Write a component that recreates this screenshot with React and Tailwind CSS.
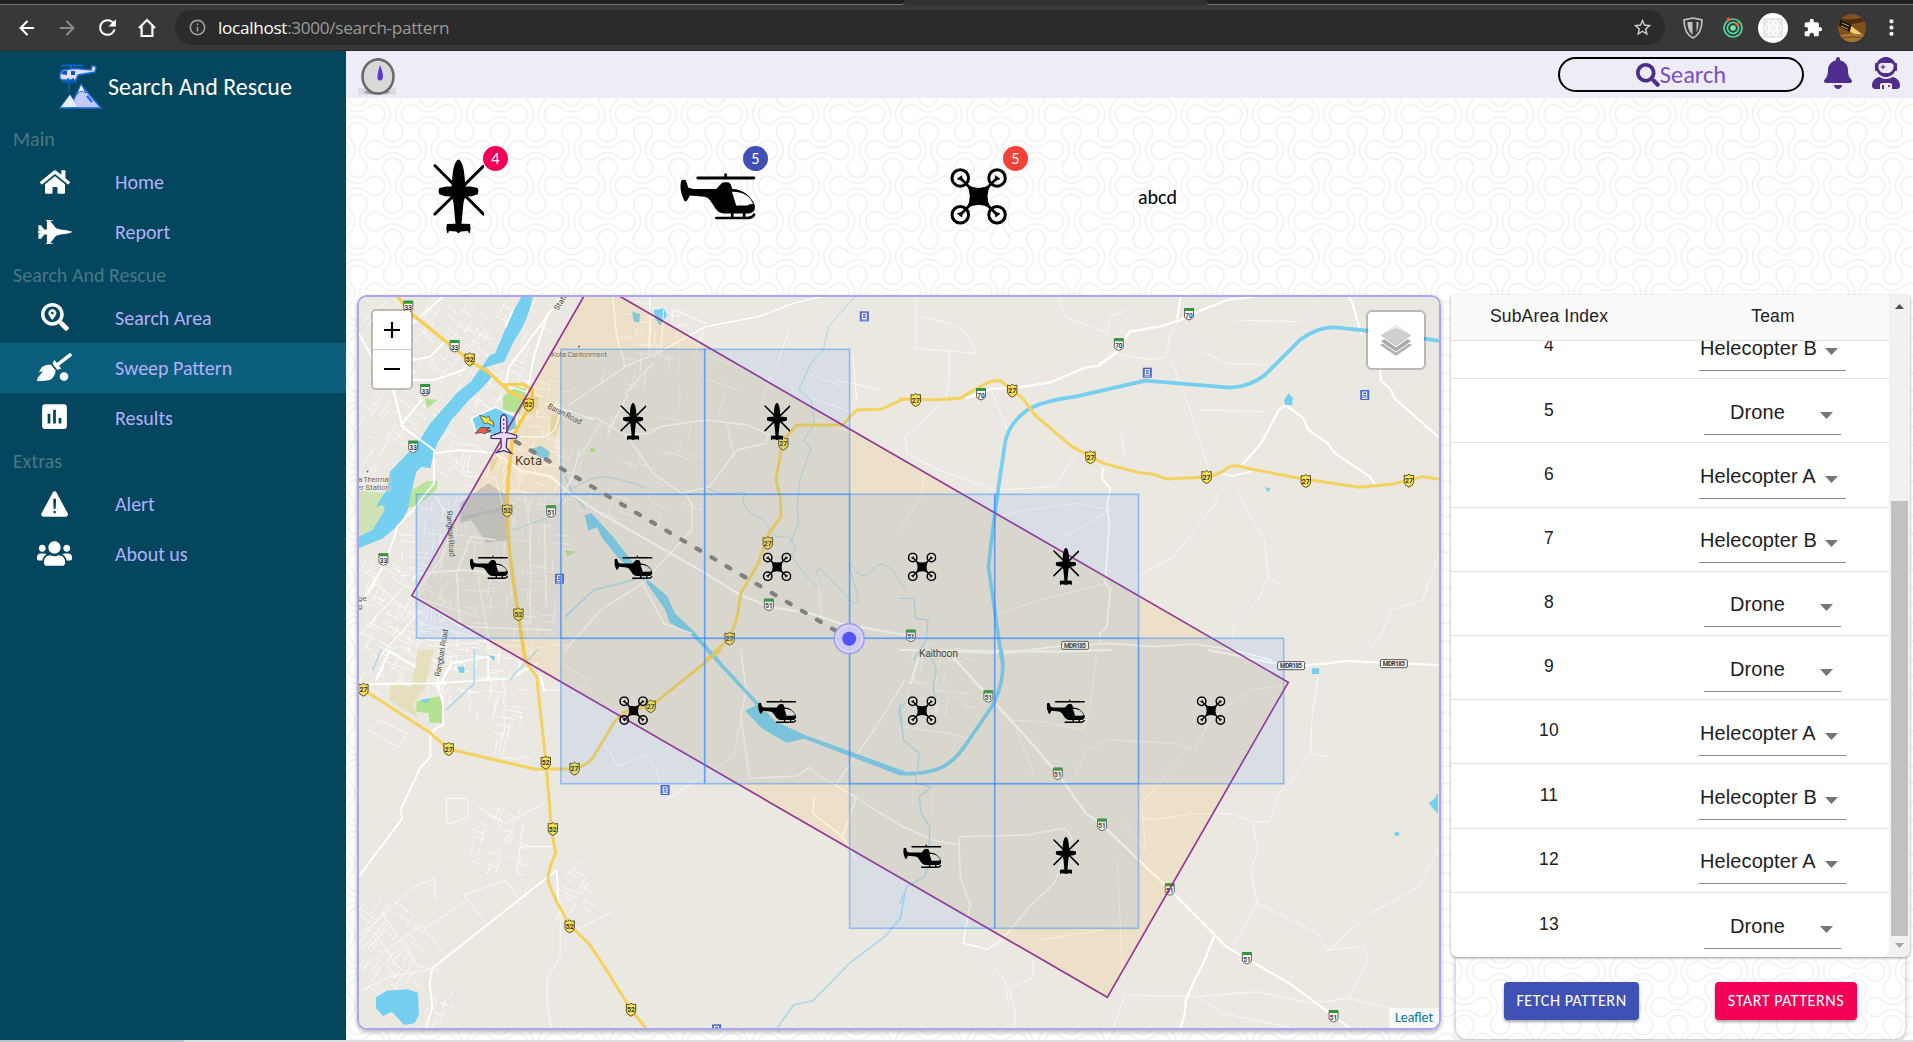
import React from "react";
import {
  FaHome,
  FaFighterJet,
  FaSearchLocation,
  FaQuidditch,
  FaUsers,
  FaSearch,
  FaBell,
  FaUserAstronaut,
} from "react-icons/fa";
import { IoWarning } from "react-icons/io5";
import { MdPoll, MdStarBorder, MdExtension, MdMoreVert, MdRefresh, MdInfoOutline } from "react-icons/md";
import { ArrowLeft, ArrowRight } from "lucide-react";

/* ---------- vehicles ---------- */

function Apache(props) {
  return (
    <svg viewBox="232 206 154 226" {...props}>
      <path d="M238 226 384 372M384 228 238 372" stroke="#000" strokeWidth="9" strokeLinecap="round" />
      <path d="M309 207c9 3 17 22 19 60l2 22 15 0 22 4q5 10 0 19l-18 6-18 1q-5 6-7 20l-6 62 26 1q3 14-1 28l-4-2-1-5-22 2-7 5-7-5-22-2-1 5-4 2q-5-14-1-28l26-1-6-62q-2-14-7-20l-18-1-18-6q-5-9 0-19l22-4 15 0 2-22c2-38 10-57 19-60z" />
    </svg>
  );
}

function Helicopter(props) {
  return (
    <svg viewBox="977 249 228 142" {...props}>
      <path d="M1030 264H1199" stroke="#000" strokeWidth="9" strokeLinecap="round" />
      <path d="M1110 252q4-4 8 0v11h-8z" />
      <path
        fillRule="evenodd"
        d="M980 272q8-4 14-1l7 22 15 4 70 0 13-14q3-6 12-6h11q8 2 12 20c30 0 56 20 68 48q4 24-18 26h-76q-14 0-24-14l-16-24q-6-10-18-12l-44-4-8 14q-3 6-9 2l-8-20q-6-22-1-41zM1133 306l12 38q2 5 8 3h26q8-4 18-4c-8-22-28-38-64-37z"
      />
      <path d="M1086 385h90q18 0 24-10" fill="none" stroke="#000" strokeWidth="8" strokeLinecap="round" />
      <path d="M1134 366v18M1170 366v18" stroke="#000" strokeWidth="8" />
    </svg>
  );
}

function Drone(props) {
  return (
    <svg viewBox="272 234 172 172" {...props}>
      <g fill="none" stroke="#000" strokeWidth="9">
        <circle cx="303" cy="264" r="25" />
        <circle cx="414" cy="264" r="25" />
        <circle cx="303" cy="375" r="25" />
        <circle cx="414" cy="375" r="25" />
      </g>
      <path
        d="M303 264 345 306M414 264 372 306M303 375 345 333M414 375 372 333"
        stroke="#000"
        strokeWidth="8"
      />
      <path d="M294 267 308 257v15zM423 267 409 257v15zM294 372 308 382v-15zM423 372 409 382v-15z" stroke="#000" strokeWidth="2" />
      <path d="M322 284q36 20 73 0-20 36 0 72-36-22-73 0 20-36 0-72z" />
    </svg>
  );
}

/* ---------- browser toolbar ---------- */

function BrowserBar() {
  return (
    <div className="h-[51px] shrink-0 flex flex-col bg-[#383838] border-b border-[#2a2a2a]">
      <div className="h-[5px] shrink-0 flex bg-[#202020]">
        <div className="w-[905px] border-b border-[#747474] rounded-br" />
        <div className="w-[301px] bg-[#303030]" />
        <div className="flex-1 border-b border-[#747474] rounded-bl" />
      </div>
      <div className="flex-1 flex items-center text-white">
        <ArrowLeft className="ml-[16px] size-[22px]" strokeWidth={2.2} />
        <ArrowRight className="ml-[18px] size-[22px] text-[#8a8a8a]" strokeWidth={2.2} />
        <MdRefresh className="ml-[17px] size-[25px]" />
        <svg className="ml-[16px] size-[22px]" viewBox="0 0 22 22" fill="none" stroke="currentColor" strokeWidth="2.2">
          <path d="M3 11 11 3l8 8M5.6 9v10h10.8V9" />
        </svg>
        <div className="ml-[17px] w-[1490px] h-[35px] rounded-full bg-[#2b2b2b] flex items-center pl-[13px] pr-3">
          <MdInfoOutline className="size-[19px] text-[#9aa0a6]" />
          <span className="ml-[11px] text-[17.2px] tracking-[-0.320px] font-['Open_Sans','Noto_Sans',sans-serif] leading-none text-[#9a9a9a]">
            <span className="text-white">localhost</span>:3000/search-pattern
          </span>
          <MdStarBorder className="ml-auto size-[21px] text-[#cfcfcf]" />
        </div>
        <svg className="ml-[18px] w-[20px] h-[22px]" viewBox="0 0 20 22">
          <path d="M10 1 19 3C19 13 16 18 10 21 4 18 1 13 1 3z" fill="none" stroke="#c4c4c4" strokeWidth="1.6" />
          <path d="M4.500 5h5v13C6.500 15 4.500 11 4.500 5z" fill="#c4c4c4" />
          <path d="M13.500 5v10c1.500-2.500 2-6 2-10z" fill="#c4c4c4" />
        </svg>
        <svg className="ml-[19px] size-[22px]" viewBox="0 0 22 22" fill="none" stroke="#4fd6a0" strokeWidth="1.7">
          <circle cx="11" cy="11" r="9" />
          <circle cx="11" cy="11" r="5.6" />
          <circle cx="11" cy="11" r="2.8" fill="#6cf0a8" stroke="none" />
          <circle cx="6.500" cy="2.600" r="2" fill="#ee5a2a" stroke="none" />
          <circle cx="15" cy="7" r="2" fill="#ee5a2a" stroke="none" />
        </svg>
        <div className="ml-[14px] size-[30px] rounded-full bg-white flex items-center justify-center">
          <svg className="size-[20px] bg-[#e8e8e8]" viewBox="0 0 20 20" fill="none" stroke="#fff" strokeWidth="1.2">
            <ellipse cx="10" cy="10" rx="8" ry="3.200" />
            <ellipse cx="10" cy="10" rx="8" ry="3.200" transform="rotate(60 10 10)" />
            <ellipse cx="10" cy="10" rx="8" ry="3.200" transform="rotate(120 10 10)" />
            <circle cx="10" cy="10" r="1" fill="#fff" />
          </svg>
        </div>
        <MdExtension className="ml-[15px] size-[20px]" />
        <svg className="ml-[15px] size-[28px] rounded-full" viewBox="0 0 28 28">
          <rect width="28" height="28" fill="#80511d" />
          <path d="M0 4q14 4 28-2v5Q12 12 0 9z" fill="#4a2d12" />
          <path d="M0 22q14-5 28-1v7H0z" fill="#a87432" />
          <path d="M0 25q14-4 28 0" fill="none" stroke="#6d4216" />
          <path d="M2 6 14 11 12 18 1 12z" fill="#15110c" />
          <path d="M4 9 11 12M3 12 10 15" stroke="#c9a850" />
          <path d="M13 12 24 20 17 20 12 18z" fill="#efd070" />
        </svg>
        <MdMoreVert className="ml-[13px] size-[25px]" />
      </div>
    </div>
  );
}

/* ---------- sidebar ---------- */

function Logo() {
  return (
    <svg className="w-[43px] h-[46px] shrink-0" viewBox="0 0 43 46">
      <path d="M2 2.500H24M12 1v4" stroke="#0a62c9" strokeWidth="2" />
      <path d="M4 7 16 5.500 32 7 33 3h3l1 2-1 4-17 3-2 5H3q-3-1-2-5 0-3 3-5z" fill="#dfdfff" stroke="#1a6fe0" strokeWidth="1.500" />
      <path d="M2 11 4 8l4-.5V12zM12 8h4v4h-4z" fill="#1450c8" />
      <path d="M4 19H18M9 15v4M14 15v4M10 19v10" stroke="#0a62c9" strokeWidth="1.500" />
      <path d="M11 44 22 22 42 45H1L11 32 18 44z" fill="#c3c8ff" stroke="#1a6fe0" strokeWidth="1.500" />
      <path d="M22 21 27 30 22 28 18 31z" fill="#fff" stroke="#1a6fe0" />
      <path d="M2 44 11 32 19 44z" fill="#ececff" />
      <path d="M28 33 33 39" stroke="#1a6fe0" strokeWidth="2" />
    </svg>
  );
}

function SectionLabel({ children }) {
  return <div className="h-9 px-[13px] flex items-center text-[20px] text-[#487887]">{children}</div>;
}

function NavItem({ icon: Icon, size = "size-[32px]", label, active }) {
  return (
    <a className={`h-[50px] flex items-center text-[20px] text-[#b3b1fd] ${active ? "bg-[#0a5d7b]" : ""}`}>
      <span className="w-[109px] flex justify-center text-white">
        <Icon className={size} />
      </span>
      <span className="ml-[6px]">{label}</span>
    </a>
  );
}

function Sidebar() {
  return (
    <aside className="w-[346px] shrink-0 bg-[#03465d]">
      <div className="h-[70px] flex items-center pl-[59px] text-white text-[24px]">
        <Logo />
        <span className="ml-[6px] pt-[2px]">Search And Rescue</span>
      </div>
      <SectionLabel>Main</SectionLabel>
      <NavItem icon={FaHome} size="size-[30px]" label="Home" />
      <NavItem icon={FaFighterJet} size="w-[34px] h-[28px]" label="Report" />
      <SectionLabel>Search And Rescue</SectionLabel>
      <NavItem icon={FaSearchLocation} size="size-[28px] mb-[3px]" label="Search Area" />
      <NavItem icon={FaQuidditch} size="w-[35px] h-[28px] mb-[2px]" label="Sweep Pattern" active />
      <NavItem icon={MdPoll} size="size-[33px] mb-[3px]" label="Results" />
      <SectionLabel>Extras</SectionLabel>
      <NavItem icon={IoWarning} size="size-[34px]" label="Alert" />
      <NavItem icon={FaUsers} size="size-[35px] mb-px" label="About us" />
    </aside>
  );
}

/* ---------- top bar ---------- */

function TopBar() {
  return (
    <header className="h-[47px] shrink-0 bg-[#ededf7] flex items-center pl-3 pr-[11px]">
      <svg className="mt-[3px] w-[38px] h-[39px]" viewBox="0 0 38 39">
        <rect y="31" width="38" height="7" fill="#dcdce2" />
        <ellipse cx="19" cy="35" rx="13" ry="2.500" fill="#a5a5aa" />
        <rect x="18" y="1" width="5" height="4" fill="#3fa08c" />
        <ellipse cx="20" cy="19.500" rx="15.500" ry="17" fill="#d9d9d9" stroke="#6a6a6a" strokeWidth="2.600" />
        <path d="M22 8q4 10 2.500 14-2.500 3-5 0Q19 17 22 8z" fill="#5b35d5" />
      </svg>
      <div className="ml-auto w-[246px] h-[35px] rounded-full border-2 border-black flex items-center justify-center text-[#7c50c4] text-[24.400px]">
        <FaSearch className="size-6 text-[#4f2d8c]" />
        <span className="leading-none pt-[2px]">Search</span>
      </div>
      <FaBell className="ml-[18px] mb-[3px] w-[32px] h-[32px] text-[#4f2d8c]" />
      <FaUserAstronaut className="ml-[16px] mb-[3px] w-[32px] h-[32px] text-[#4f2d8c]" />
    </header>
  );
}

/* ---------- fleet ---------- */

function FleetItem({ icon: Icon, size, count, color }) {
  return (
    <div className="relative size-[76px] flex items-center justify-center">
      <Icon className={`${size} shrink-0`} />
      <span
        className={`absolute -top-[13px] -right-[12px] size-[25px] rounded-full flex items-center justify-center text-white text-[16.500px] leading-none pt-px ${color}`}
      >
        {count}
      </span>
    </div>
  );
}

function Fleet() {
  return (
    <section className="h-[197px] shrink-0 flex items-center pl-[74px] gap-[184px]">
      <FleetItem icon={Apache} size="w-[51px] h-[75px]" count={4} color="bg-[#f50057]" />
      <FleetItem icon={Helicopter} size="w-[76px] h-[47px]" count={5} color="bg-[#3f51b5]" />
      <FleetItem icon={Drone} size="w-[57px] h-[57px]" count={5} color="bg-[#f44336]" />
      <span className="-ml-[62px] text-[20px]">abcd</span>
    </section>
  );
}

/* ---------- map ---------- */

/* The base map is described in four sheets; each has its own origin and a shared scale. */
const SX = 1 / 2.851;
const SY = 1 / 3;
const SHEETS = { nw: [355, 290], ne: [900, 290], sw: [355, 650], se: [900, 650] };
const at = (s, x, y) => [SHEETS[s][0] + x * SX, SHEETS[s][1] + y * SY];

function Sheet({ id, children }) {
  return (
    <g transform={`translate(${SHEETS[id][0]} ${SHEETS[id][1]}) scale(${SX} ${SY})`}>{children}</g>
  );
}

function Lines({ d, color = "#fff", w = 1, o = 1 }) {
  return (
    <path
      d={d}
      fill="none"
      stroke={color}
      strokeWidth={w}
      strokeOpacity={o}
      strokeLinejoin="round"
      strokeLinecap="round"
      vectorEffect="non-scaling-stroke"
    />
  );
}

/* Small street mesh: [x, y, width, height, step, angle in degrees, density] */
const TOWNS = [
  [362, 298, 130, 110, 7, 40, 0.45],
  [470, 298, 70, 110, 8, 25, 0.3],
  [362, 400, 90, 70, 8, 35, 0.4],
  [455, 440, 110, 60, 7, 15, 0.55],
  [500, 380, 60, 70, 7, 5, 0.4],
  [620, 300, 60, 60, 7, 5, 0.45],
  [400, 500, 160, 150, 8, 5, 0.4],
  [362, 560, 90, 130, 7, 28, 0.6],
  [440, 640, 80, 50, 7, 5, 0.5],
  [470, 690, 50, 70, 8, 10, 0.3],
  [560, 440, 130, 80, 10, 20, 0.25],
  [590, 370, 100, 70, 11, 10, 0.16],
  [362, 900, 50, 90, 8, 38, 0.6],
  [560, 870, 30, 60, 6, 30, 0.4],
  [470, 805, 50, 70, 7, 20, 0.35],
  [425, 990, 30, 40, 6, 20, 0.35],
  [905, 640, 60, 70, 8, 10, 0.35],
  [700, 330, 130, 90, 22, 20, 0.25],
];
const mesh = (() => {
  let seed = 7;
  const rnd = () => {
    seed = (seed * 16807) % 2147483647;
    return seed / 2147483647;
  };
  let d = "";
  for (const [x, y, w, h, step, deg, density] of TOWNS) {
    const c = Math.cos((deg * Math.PI) / 180);
    const s = Math.sin((deg * Math.PI) / 180);
    for (let i = 0; i < w; i += step)
      for (let j = 0; j < h; j += step) {
        if (rnd() > density) continue;
        const px = x + i + rnd() * 4;
        const py = y + j + rnd() * 4;
        const l = step * (0.8 + rnd() * 1.4);
        const [dx, dy] = rnd() > 0.5 ? [c * l, s * l] : [-s * l, c * l];
        d += `M${px.toFixed(1)} ${py.toFixed(1)}l${dx.toFixed(1)} ${dy.toFixed(1)}`;
      }
  }
  return d;
})();

const SHIELDS = [
  ["nw", 327, 208, "52"], ["nw", 495, 344, "52"], ["nw", 434, 662, "52"], ["nw", 466, 973, "52"],
  ["nw", 1221, 461, "27"], ["nw", 1177, 759, "27"], ["nw", 1068, 1046, "27"],
  ["ne", 45, 330, "27"], ["ne", 320, 302, "27"], ["ne", 543, 502, "27"], ["ne", 874, 561, "27"],
  ["ne", 1157, 573, "27"], ["ne", 1451, 572, "27"],
  ["sw", 24, 119, "27"], ["sw", 267, 297, "27"], ["sw", 544, 338, "52"], ["sw", 626, 356, "27"],
  ["sw", 843, 169, "27"], ["sw", 564, 537, "52"], ["sw", 612, 829, "52"], ["sw", 787, 1079, "52"],
];
const STATE_SHIELDS = [
  ["nw", 152, 50, "33"], ["nw", 284, 168, "33"], ["nw", 200, 300, "33"], ["nw", 166, 470, "33"],
  ["nw", 81, 808, "33"], ["nw", 559, 664, "51"], ["nw", 1180, 944, "51"],
  ["ne", 824, 72, "70"], ["ne", 624, 163, "70"], ["ne", 231, 312, "70"], ["ne", 31, 1037, "51"],
  ["se", 252, 139, "51"], ["se", 450, 371, "51"], ["se", 576, 524, "51"], ["se", 769, 718, "51"],
  ["se", 989, 924, "51"], ["se", 1236, 1098, "51"],
];
const STATIONS = [
  ["nw", 1452, 79], ["nw", 583, 866], ["ne", 705, 248], ["ne", 1325, 315], ["sw", 884, 420], ["sw", 1031, 1138],
];
const MDR = [["ne", 499, 1066], ["se", 1115, 47], ["se", 1408, 41]];

function Shield({ x, y, n }) {
  return (
    <g transform={`translate(${x} ${y})`}>
      <path d="M-4.700-5.500-2-5 0-6.500 2-5 4.700-5.500V2Q4 5 0 6.500-4 5-4.700 2z" fill="#fbe152" stroke="#55502e" />
      <text y="2.600" textAnchor="middle" fontSize="7" fontWeight="700" fill="#333">{n}</text>
    </g>
  );
}

function StateShield({ x, y, n }) {
  return (
    <g transform={`translate(${x} ${y})`}>
      <path d="M-4.500-5.500H4.500V3Q4 5 0 6-4 5-4.500 3z" fill="#fff" stroke="#555" strokeWidth="0.900" />
      <path d="M-4.500-6H4.500V-3H-4.500z" fill="#2c9a35" />
      <text y="3.600" textAnchor="middle" fontSize="6.500" fontWeight="700" fill="#333">{n}</text>
    </g>
  );
}

function BaseMap() {
  return (
    <g>
      <rect x="355" y="290" width="1090" height="745" fill="#ebe8e1" />
      <Lines d={mesh} w={0.9} o={0.8} />
      <Sheet id="nw">
        <path d="M0 600 90 610 130 660 40 735 0 760z" fill="#cfe3b4" />
        <path d="M130 605 165 598 205 573 237 573 232 600 175 650 130 655z" fill="#b9e59b" />
        <path d="M422 320 460 290 500 300 470 370 422 360z" fill="#b3e291" />
        <path d="M500 310 527 318 515 370 490 375zM560 375 590 365 575 435 555 430zM380 510 410 500 390 545z" fill="#e4dcb4" />
        <path d="M300 640 380 580 440 620 437 750 375 758 330 690 300 700z" fill="#c9c9cb" />
        <path d="M305 685 425 655" stroke="#bdbbc2" strokeWidth="10" />
        <path d="M200 325 235 330 205 355zM670 475h14v12h-14zM600 780 630 785 605 800z" fill="#b3e291" />
        <path d="M475 20H507Q495 90 455 150L425 215 372 232 395 255Q360 300 325 330L275 390 235 460 222 500 215 535 190 530 175 545 160 610 150 660 130 700 80 745 0 780V745L50 720 85 660 80 645 60 650 90 600 100 545 150 490 190 440 215 400 290 310 330 275 385 195 400 190 425 125 445 75z" fill="#74cff1" />
        <path d="M332 385 400 352 460 380 462 415 415 440 345 425z" fill="#74cff1" stroke="#fff" strokeWidth="5" />
        <path d="M790 65 813 72 810 98 795 95zM852 60 880 55 890 75 870 107 855 85z" fill="#74cff1" />
        <path d="M505 475 530 467 555 485 553 505 530 505 507 488z" fill="#74cff1" />
        <path d="M655 675 675 670 735 740 780 800 818 855 845 878 890 918 912 970 965 1022 1040 1110 1030 1110 955 1032 897 998 885 960 832 880 745 797 705 745 690 712 665 722z" fill="#74cff1" />
        <Lines d="M610 600Q680 560 700 560T760 570T830 595M450 720 490 705 560 680 610 600M1000 590Q1040 620 1080 610T1110 620 1120 660 1150 680 1180 715 1220 740 1250 760 1247 790 1285 855 1320 860 1380 895 1425 885 1420 830 1480 835 1568 900M1425 20 1350 110 1335 180 1300 220 1265 300 1300 330 1310 400 1280 450 1300 480 1270 560 1260 650 1265 700 1240 760" color="#a7d8ee" />
        <Lines d="M600 980 680 900 760 880 820 860 840 830M600 560 620 610 655 655" color="#a7d8ee" w={1.5} />
      </Sheet>
      <Sheet id="nw">
        <Lines d="M0 110 50 205M110 300 135 410 225 480 225 580 165 660 120 710 110 750 80 830 10 950M135 400 190 330M165 270H225L310 240 325 215M165 210 215 200 260 150M165 100 250 20M590 20 540 90 440 230 430 280M430 110 450 60M550 70 510 200 490 310M225 490 300 480 400 490 470 540 560 560 600 600 700 670 900 790 1000 850 1090 910 1180 950 1300 970 1380 1000 1568 1035" w={2} />
        <Lines d="M470 440H540L570 420 590 350M610 345 770 230 860 190 1000 110 1150 80 1250 40 1330 20M650 380 690 385 770 435 840 430 870 410 1000 390 1120 405 1180 435M1180 430 1170 460 1090 480 1010 590 930 610 850 550 790 460 775 440M735 20 745 130 770 230M840 20 840 200M770 310 850 220M720 430 780 310M440 290 530 320M550 340 680 390M165 870 180 850 300 840 440 850M180 930 300 1010 560 1020M230 620 280 700 250 800 165 920M300 1010 290 850 330 740 400 750M960 720 960 640 940 610M960 720 820 880 700 960 600 1080M820 880 880 1000 960 1030M640 480 620 560 590 620" w={1.3} />
        <Lines d="M10 950 60 880 190 1000 340 1040M10 1040 130 900M60 1110 190 960M165 920 350 980M380 1040 350 860M540 700 545 950M480 600 500 720 500 1000M400 560 420 640M1320 860 1330 980M880 60 870 200M910 60 1000 100M1370 270 1500 300M1420 200 1430 330M1060 400 1080 500M700 400 640 500" w={1.2} o={0.75} />
        <Lines d="M122 20 160 70 330 215 380 245 420 285 440 305 490 330M420 285 480 283 507 300 500 345 470 400 450 440 437 560 433 660 440 780 455 900 478 1060 485 1110" color="#f6cf57" w={3.500} />
        <Lines d="M1000 1110 1068 1046 1090 980 1100 910 1150 820 1180 730 1215 680 1212 620 1200 570 1220 450 1260 405H1390L1430 360 1500 358 1568 325" color="#f4d25e" w={3} />
      </Sheet>
      <Sheet id="ne">
        <Lines d="M190 325 260 297 330 293 430 277 530 232 565 228 620 185 655 125 740 110 800 90 860 60 940 28 1010 20M790 85 800 20M975 525 1030 460 1080 360 1100 345 1150 385 1165 420 1220 460 1240 490 1340 560 1355 585M1370 240V270L1400 300 1410 325 1480 390 1534 440M1315 130 1290 40 1280 20" w={2.200} />
        <Lines d="M580 535 575 565 600 595 590 650 597 700 585 880 600 895 590 1010 570 1030 568 1055M0 1080 300 1090 440 1070 600 1060 720 1070 840 1062 950 1080 1060 1110M915 550 950 558 1000 545" w={1.700} />
        <Lines d="M45 20V175L220 190 190 130 140 100 60 80M140 190V270L130 330 15 440 20 490 110 540 270 600M260 300 310 430M450 20 470 80 590 130 600 80 650 60M560 230 600 190 720 210 760 200 770 130 790 100M770 200 830 370 880 540M850 360 1040 365M955 90 1140 95 1200 30M800 120 870 190 930 220 1050 225M280 680 360 660 500 640 600 660 470 740M660 870 780 800 900 640 905 610M960 600 1010 700 1040 750 1050 860 1080 880M1050 860 1020 930 950 1010V1060M1534 800 1490 930 1400 960 1370 1040 1310 1110M630 420 640 500 590 540M280 970 400 930 590 880M0 720 60 620 70 560M280 600 440 590 510 480" o={0.650} />
        <Lines d="M290 1110 270 960 252 830 268 690 285 560 298 470Q305 400 370 355Q420 330 500 320L700 272 940 293Q1000 290 1040 255L1140 150Q1190 110 1240 112L1330 122 1534 152" color="#74cff1" w={3.700} />
        <path d="M1095 330 1108 310 1120 325 1118 345 1098 345zM1040 590 1057 597 1048 607z" fill="#74cff1" />
        <Lines d="M0 925 40 925 45 985 80 990 75 1050 40 1110" color="#a7d8ee" w={1.300} />
        <Lines d="M0 327 110 329 170 325 220 295Q270 262 290 275L350 325 385 375 490 470 580 520 680 548 720 552 760 567 830 563 880 562 920 545Q945 515 990 535L1150 567 1310 592 1400 583 1490 560 1534 567" color="#f4d25e" w={3} />
      </Sheet>
      <Sheet id="sw">
        <path d="M100 100 160 110 180 0H225L200 110 165 160 180 205 98 150z" fill="#e3dcb4" opacity=".8" />
        <path d="M175 155 240 138 250 170 248 218H212L210 190 175 185z" fill="#b3e291" />
        <path d="M185 150 215 145 205 160zM380 15 400 20 395 32zM292 50H312V68H298zM60 1042 90 1022 150 1018 180 1028 182 1095 170 1120 140 1125 105 1085 80 1098 60 1075z" fill="#74cff1" />
        <Lines d="M250 0 240 60 235 110 250 150 252 225 230 235 215 260V320L185 355 130 480 135 505 10 680M40 102 230 100 440 85 520 40M60 90 100 0M240 110 275 40 380 20V85M170 50 90 0M530 80 540 120M580 760 575 660 220 955 213 1000 220 1070 205 1132" w={1.900} />
        <Lines d="M10 860 170 710 228 685V750M10 880 80 790 170 940M20 960 140 860 190 825 260 920M310 735 430 690 465 745M310 735 375 820M200 835 320 750M262 445H322V505L262 522zM40 240 70 210 150 250 125 290zM60 850 120 950M40 890 100 830M90 810 20 900M140 870 180 950 240 960M585 750V920L548 985V1060L560 1132M640 835 735 785M350 470 430 520 540 460M470 590 560 590M480 520 460 670 480 675M600 680 650 630M710 280 750 350 830 315 860 360 870 400M885 450 960 400 1080 320 1100 200M0 1030 100 980 210 960M585 120 535 120M587 40 665 90 620 130" o={0.750} />
        <Lines d="M1100 0 1115 120 1100 200 1125 385 1260 378 1295 352 1320 375 1370 405 1568 535M1370 405 1480 240 1568 90M1390 560 1430 440 1410 430M1310 440 1305 490 1390 560 1430 630" w={1.400} o={0.850} />
        <Lines d="M340 0 340 100 260 180M75 0 50 60M520 0 440 90M1205 1132 1250 1065 1305 1052 1350 1005 1410 940 1510 860 1555 805 1568 730M1568 160 1550 180 1560 240" color="#a7d8ee" w={1.500} />
        <Lines d="M1005 0 1150 165" color="#74cff1" w={3.400} />
        <path d="M1112 182 1150 162 1200 215 1285 256 1568 364V375H1550L1280 266 1230 278 1160 235z" fill="#74cff1" />
        <Lines d="M478 0 490 40 518 80 530 200 545 340 560 540 572 610Q545 670 552 700L575 755 612 825 670 885 720 965 787 1079 827 1132M24 119 210 245 267 297 400 330 515 358 626 356Q665 345 680 320L740 215 770 185 843 169 1042 0" color="#f4d25e" w={3} />
      </Sheet>
      <Sheet id="se">
        <path d="M1174 55H1195V72H1174zM1410 547H1423V557H1410zM1534 428 1525 445 1507 460 1534 492z" fill="#74cff1" />
        <Lines d="M30 100 60 0M0 0 440 5 600 0M880 0 950 15 1120 50 1220 40 1270 33 1534 45M140 10 252 139 350 250 450 371 530 490 576 524 680 630 769 718 930 890 1110 1000 1280 1132M895 860 865 940 840 990 815 1050 812 1090 800 1132" w={2.200} />
        <Lines d="M0 525 90 570 168 585M168 560 360 555 470 535 490 560 440 700 370 770 290 870 250 898 180 880 200 765 172 680 168 560" w={1.500} o={0.850} />
        <Lines d="M1192 80 1175 200 1170 310 1220 320M1170 310 1110 400 1080 430 1055 515 1005 515 940 490 840 490 720 510 680 500M1005 515 1020 600 1000 660 1018 760 950 890M1018 760 1190 850 1220 905M1534 600 1480 710 1340 790 1220 900 1320 890 1335 925 1280 1045 1170 1060 1020 1025 840 1040 640 1035M500 380 530 300 590 270 790 280 840 300 890 200 1000 120 1100 105M400 870 580 840M310 1070 300 990 240 920M380 930V980L310 1020 330 1090 325 1132M1110 1132 920 1090 850 1040M640 1035 610 1132M690 470 700 600 640 520M300 210 410 215 520 240 540 180 560 20M330 230 380 370M90 400V500M690 460 740 400 820 290M620 640 635 980M1280 1045 1420 1080M0 230 140 250 210 270" o={0.650} />
        <Lines d="M288 0Q305 80 265 165L190 280Q150 345 100 360T0 370" color="#74cff1" w={3.700} />
        <Lines d="M85 20Q110 50 100 80T100 140M0 160 10 270 55 310 45 400 90 410 55 440 60 490 85 530 80 650 70 680 20 710 0 760" color="#a7d8ee" w={1.300} />
      </Sheet>
      <g fontFamily="Roboto, sans-serif">
        <g fill="#6f665c" stroke="#f2efe9" strokeWidth="1.200" paintOrder="stroke" fontSize="8">
          <text x="551" y="356.500" textLength="56">Kota Cantonment</text>
          <text x="358" y="481.500" textLength="32">a Thermal</text>
          <text x="357" y="489.500" textLength="33">er Station</text>
          <text x="358" y="601">ge</text>
          <text x="358" y="609">g</text>
          <g fill="#4c4c4c">
            <text transform="translate(547 408) rotate(27)" textLength="37">Baran Road</text>
            <text transform="translate(446.500 511) rotate(86)" textLength="46">Rangbari Road</text>
            <text transform="translate(440 677) rotate(-80)" textLength="48">Rangbari Road</text>
            <text transform="translate(558 311) rotate(-58)">Station</text>
          </g>
        </g>
        <circle cx="579" cy="346.500" r="1" fill="#7a5f4a" />
        <circle cx="367.500" cy="471.500" r="1" fill="#7a5f4a" />
        {SHIELDS.map(([s, x, y, n], i) => {
          const p = at(s, x, y);
          return <Shield key={i} x={p[0]} y={p[1]} n={n} />;
        })}
        {STATE_SHIELDS.map(([s, x, y, n], i) => {
          const p = at(s, x, y);
          return <StateShield key={i} x={p[0]} y={p[1]} n={n} />;
        })}
        {STATIONS.map(([s, x, y], i) => {
          const p = at(s, x, y);
          return (
            <g key={i} transform={`translate(${p[0]} ${p[1]})`}>
              <rect x="-4.500" y="-5" width="9" height="10" fill="#4766d2" />
              <rect x="-2" y="-3" width="4" height="5" fill="#4766d2" stroke="#fff" />
              <path d="M-2-.5H2M-3 3.500H3" stroke="#fff" strokeWidth=".8" />
            </g>
          );
        })}
        {MDR.map(([s, x, y], i) => {
          const p = at(s, x, y);
          return (
            <g key={i} transform={`translate(${p[0]} ${p[1]})`}>
              <rect x="-13.500" y="-4" width="27" height="8" rx="1.500" fill="#fff" stroke="#555" />
              <text y="2.500" textAnchor="middle" fontSize="6.500" fontWeight="700" fill="#333" textLength="22">MDR185</text>
            </g>
          );
        })}
        <g fill="#333" stroke="#f2efe9" strokeWidth="1.500" paintOrder="stroke">
          <text x="515" y="465" fontSize="13" textLength="27">Kota</text>
          <text x="919" y="656.500" fontSize="10.500" textLength="39">Kaithoon</text>
        </g>
      </g>
    </g>
  );
}

const COLS = [416.4, 560.9, 704.7, 849.6, 994.7, 1138.5, 1283.7];
const ROWS = [349.3, 494.3, 638.3, 783.7, 928.3];
/* [row, first column, one past the last column] */
const CELL_ROWS = [[0, 1, 3], [1, 0, 5], [2, 1, 6], [3, 3, 5]];

const UNITS = [
  [Apache, 633.1, 421.7], [Apache, 777, 421.7], [Apache, 1065.9, 566.7], [Apache, 1065.9, 855.7],
  [Helicopter, 489, 567.3], [Helicopter, 633.5, 567.3], [Helicopter, 777.3, 711.3],
  [Helicopter, 1065.9, 711.3], [Helicopter, 922.4, 856.3],
  [Drone, 777, 567], [Drone, 922, 567], [Drone, 633.5, 710.7], [Drone, 922, 710.7], [Drone, 1211, 710.7],
];
const UNIT_SIZE = new Map([[Apache, [26.5, 38]], [Helicopter, [38.5, 24]], [Drone, [29, 29]]]);

function Overlays() {
  return (
    <g>
      <path
        d="M411.800 595.700 592.800 280.700 1288.300 682.300 1107.300 997.300z"
        fill="#ffa500"
        fillOpacity="0.110"
        stroke="#8a1a8a"
        strokeOpacity="0.850"
        strokeWidth="1.700"
      />
      <g fill="#3388ff" fillOpacity="0.100" stroke="#3388ff" strokeOpacity="0.450" strokeWidth="1.600">
        {CELL_ROWS.map(([r, a, b]) =>
          Array.from({ length: b - a }, (_, i) => (
            <rect
              key={`${r}-${i}`}
              x={COLS[a + i]}
              y={ROWS[r]}
              width={COLS[a + i + 1] - COLS[a + i]}
              height={ROWS[r + 1] - ROWS[r]}
            />
          ))
        )}
      </g>
      <path d="M849.200 638.700 503 434" stroke="#808080" strokeWidth="4.200" strokeDasharray="4.500 13" strokeDashoffset="2" strokeLinecap="round" />
      <circle cx="849.200" cy="638.700" r="15" fill="#c9c8f7" fillOpacity="0.850" stroke="#9d98f0" strokeWidth="1.400" />
      <circle cx="849.200" cy="638.700" r="13" fill="none" stroke="#d9d8fa" strokeWidth="1.500" />
      <circle cx="849.200" cy="638.700" r="7" fill="#5353fb" />
      {UNITS.map(([Icon, x, y], i) => {
        const [w, h] = UNIT_SIZE.get(Icon);
        return <Icon key={i} x={x - w / 2} y={y - h / 2} width={w} height={h} />;
      })}
      <Sheet id="nw">
        <path d="M355 375 375 383 381 378 385 392 394 394 396 409 376 398 369 402z" fill="#ffdf3c" stroke="#2b3b66" strokeWidth="2" />
        <path d="M342 430 360 412 385 413 374 420 388 422 368 432 362 428z" fill="#ef5a3c" stroke="#2b3b66" strokeWidth="2" />
        <path
          d="M424 374q8 2 9 14v40l28 8v8l-28 2-2 26 15 18-22-8-21 6 14-16-1-26-28-1v-8l27-9v-40q1-12 9-14z"
          fill="#f2dcff"
          stroke="#3e2b6b"
          strokeWidth="3.500"
        />
        <path d="M424 386v6M424 400v4M424 412v4M420 426v4M429 426v4" stroke="#3e2b6b" strokeWidth="4" />
      </Sheet>
    </g>
  );
}

function MapPanel() {
  return (
    <div className="relative w-[1084px] h-[735px] shrink-0 rounded-[10px] border-2 border-[#aaa6f2] overflow-hidden shadow-[0_2px_4px_rgba(0,0,0,0.3)]">
      <svg className="block w-[1080px] h-[731px]" viewBox="359 297 1080 731">
        <BaseMap />
        <Overlays />
      </svg>
      <div className="absolute left-[12px] top-[12px] rounded-[5px] border-2 border-black/20 bg-clip-padding">
        <div className="w-[38px] rounded-[3px] bg-white text-black">
          <div className="h-[39px] border-b border-[#ccc] flex items-center justify-center">
            <svg className="size-4" viewBox="0 0 16 16" stroke="#000" strokeWidth="2.200">
              <path d="M0 8H16M8 0V16" />
            </svg>
          </div>
          <div className="h-[38px] flex items-center justify-center">
            <svg className="size-4" viewBox="0 0 16 16" stroke="#000" strokeWidth="2.200">
              <path d="M0 8H16" />
            </svg>
          </div>
        </div>
      </div>
      <div className="absolute right-[13px] top-[13px] size-[60px] rounded-[6px] border-2 border-black/20 bg-white bg-clip-padding flex items-center justify-center">
        <svg className="w-[34px] h-[34px]" viewBox="0 0 34 34">
          <path d="M1 22 17 33 33 22 17 14z" fill="#b4b4b4" />
          <path d="M1 18 17 29 33 18 17 10z" fill="#a8a8a8" stroke="#fff" strokeWidth="1" />
          <path d="M1 12.500 17 24 33 12.500 17 1z" fill="#cfcfcf" stroke="#fff" strokeWidth="1" />
          <path d="M5 10 17 1 29 10 17 5z" fill="#ececec" />
        </svg>
      </div>
      <div className="absolute right-0 bottom-0 h-[20px] w-[50px] flex items-center justify-center bg-white/70 text-[13.900px] text-[#0078a8] leading-none">
        Leaflet
      </div>
    </div>
  );
}

/* ---------- assignment table ---------- */

const TEAMS = [
  [4, "Helecopter B"], [5, "Drone"], [6, "Helecopter A"], [7, "Helecopter B"], [8, "Drone"],
  [9, "Drone"], [10, "Helecopter A"], [11, "Helecopter B"], [12, "Helecopter A"], [13, "Drone"],
];

function TeamRow({ index, team, first, last }) {
  const drone = team === "Drone";
  return (
    <div
      className={`flex h-[64.200px] shrink-0 items-center ${last ? "" : "border-b border-[#e0e0e0]"} ${first ? "-mt-[26px]" : ""}`}
    >
      <div className="w-[196px] pb-[1px] text-center text-[17.500px] tracking-[0.190px] leading-none">{index}</div>
      <div className="flex-1 flex justify-center pl-[9px]">
        <div
          className={`relative mt-[12px] h-[36px] border-b border-[#8c8c8c] flex text-[20px] tracking-[0.100px] leading-none pt-[3px] ${
            drone ? "w-[137px] pl-[26px]" : "w-[147px] pl-px"
          }`}
        >
          {team}
          <svg className="absolute right-[8px] top-[13px] w-[13px] h-[7px]" viewBox="0 0 13 7">
            <path d="M0 0H13L6.500 7z" fill="#757575" />
          </svg>
        </div>
      </div>
    </div>
  );
}

function TeamTable() {
  return (
    <div className="h-[662px] shrink-0 flex w-[459px] rounded-b-[6px] bg-[#f1f1f1] shadow-[0_1px_3px_rgba(0,0,0,0.4)] font-['Liberation_Sans',Arial,sans-serif] text-[#212121]">
      <div className="w-[438px] bg-white rounded-b-[8px] overflow-hidden flex flex-col">
        <div className="relative h-[46px] shrink-0 bg-[#fafafa] border-b border-[#e0e0e0] flex items-center text-[17.500px] tracking-[0.190px] leading-none pb-px">
          <div className="w-[196px] text-center">SubArea Index</div>
          <div className="flex-1 text-center pl-[10px]">Team</div>
        </div>
        <div className="flex-1 overflow-hidden flex flex-col">
          {TEAMS.map(([index, team], i) => (
            <TeamRow key={index} index={index} team={team} first={i === 0} last={i === TEAMS.length - 1} />
          ))}
        </div>
      </div>
      <div className="flex-1 flex flex-col items-center">
        <svg className="mt-[9px] w-[9px] h-[5px]" viewBox="0 0 9 5">
          <path d="M0 5 4.500 0 9 5z" fill="#505050" />
        </svg>
        <div className="mt-[192px] w-[17px] flex-1 bg-[#c1c1c1]" />
        <svg className="mt-[7px] mb-[9px] w-[9px] h-[5px]" viewBox="0 0 9 5">
          <path d="M0 0 4.500 5 9 0z" fill="#a3a3a3" />
        </svg>
      </div>
    </div>
  );
}

function Actions() {
  const base =
    "h-[38px] rounded-[4px] flex items-center justify-center text-white text-[16.200px] tracking-[0.500px] leading-none pt-px shadow-[0_2px_3px_rgba(0,0,0,0.35)]";
  return (
    <div className="ml-[5px] w-[449px] h-[82px] shrink-0 rounded-b-[10px] shadow-[0_1px_5px_rgba(60,60,90,0.4)] flex pt-[25px] pl-[48px] gap-[76px] [clip-path:inset(0_-8px_-8px_-8px)]">
      <button className={`${base} w-[135px] bg-[#3f51b5]`}>FETCH PATTERN</button>
      <button className={`${base} w-[142px] bg-[#f50057]`}>START PATTERNS</button>
    </div>
  );
}

/* Interlocking dumbbell wallpaper */
function Wallpaper() {
  const bell =
    "M-11-6.900A15.700 15.700 0 0 0 11-6.900A9.700 9.700 0 1 1 11 6.900A15.700 15.700 0 0 0-11 6.900A9.700 9.700 0 1 1-11-6.900z";
  const a = 35.71;
  const spots = [];
  for (let i = -1; i <= 3; i++) for (let j = -1; j <= 3; j++) spots.push([i, j]);
  return (
    <svg className="absolute inset-0 w-full h-full -z-10" aria-hidden="true">
      <defs>
        <pattern id="bells" x="11.300" y="-19.400" width={a * 2} height={a * 2} patternUnits="userSpaceOnUse">
          <g fill="none" stroke="#f0f0f1" strokeWidth="1.500">
            {spots.map(([i, j]) => (
              <path
                key={`${i},${j}`}
                d={bell}
                transform={`translate(${i * a} ${j * a}) rotate(${(i + j) % 2 === 0 ? 90 : 0})`}
              />
            ))}
          </g>
        </pattern>
      </defs>
      <rect width="100%" height="100%" fill="#fff" />
      <rect width="100%" height="100%" fill="url(#bells)" />
    </svg>
  );
}

export default function App() {
  return (
    <div className="w-[1913px] h-[1042px] overflow-hidden flex flex-col bg-white font-[Carlito,Lato,sans-serif] text-black">
      <BrowserBar />
      <div className="flex-1 min-h-0 flex">
        <Sidebar />
        <main className="flex-1 min-w-0 flex flex-col">
          <TopBar />
          <div className="relative isolate flex-1 min-h-0 flex flex-col overflow-hidden">
            <Wallpaper />
            <Fleet />
            <div className="flex pl-[11px]">
              <MapPanel />
              <div className="ml-[10px] flex flex-col">
                <TeamTable />
                <Actions />
              </div>
            </div>
          </div>
        </main>
      </div>
      <div className="h-[2px] shrink-0 flex bg-[#dedede]">
        <div className="w-[184px] bg-[#b9c4c8]" />
      </div>
    </div>
  );
}
